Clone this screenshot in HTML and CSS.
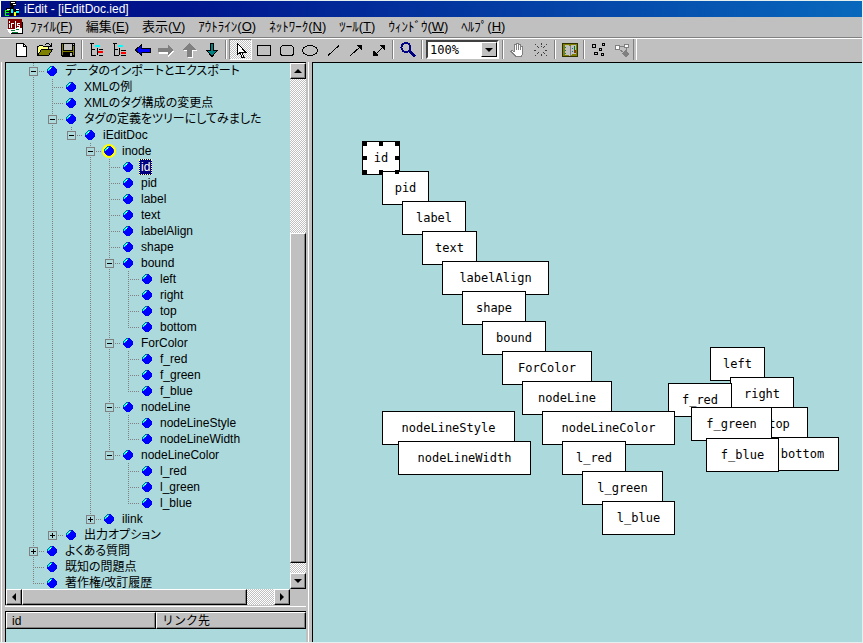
FILE: index.html
```html
<!DOCTYPE html>
<html lang="ja">
<head>
<meta charset="utf-8">
<title>iEdit - [iEditDoc.ied]</title>
<link rel="stylesheet" href="styles.css">
</head>
<body>
<svg class="defs" aria-hidden="true">
  <symbol id="ball" viewBox="0 0 10 10">
    <path fill="#00f" d="M3 0h4v1h1v1h1v1h1v4H9v1H8v1H7v1H3V9H2V8H1V7H0V3h1V2h1V1h1z"/>
    <path fill="#006c8c" d="M3 0h2v1H3zM2 1h1v1H2zM1 2h1v1H1zM0 3h1v2H0z"/>
    <path fill="#0ff" d="M3 1h2v1H3zM2 2h2v1H2zM1 3h2v1H1zM1 4h1v1H1z"/>
    <path fill="#fff" d="M3 2h1v1H3z"/>
  </symbol>
</svg>
<div class="window">
  <header class="titlebar">
    <svg width="16" height="16" viewBox="0 0 16 16"><path d="M5 0h6v5H9v3h5v4h-4l-2-3-2 3H1V7h4l1-2H5z"/><path fill="#fff" d="M6 1h4v1H6zM8 3h3v1H8zM2 8h3v1H2zM11 8h3v1h-3z"/><path fill="#0f0" d="M0 9h4v1H1v1h3v1H1v2h3v1H0z"/><path fill="#0ff" d="M6 8h2v5H6zM11 10h3v2h-3z"/><path fill="#ff0" d="M9 11h2v4H9z"/><path d="M5 12h3v3H5zM11 12h3v2h-3z"/></svg>
    <h1>iEdit - [iEditDoc.ied]</h1>
  </header>
  <nav class="menubar">
    <svg width="17" height="16" viewBox="0 0 17 16"><path fill="#800000" d="M1 0h14v11H1z"/><path fill="#fff" d="M2 2h1v2H2zM2 5h1v4H2zM4 4h3v1H5v4H4zM8 2h1v7H8zM10 4h3v1h-2v1h2v3h-3V8h2V7h-2z"/><path fill="#fff" d="M0 10l15-1v6H3z"/><path fill="#087830" d="M4 11h4v1H4zM9 10h3v1H9zM5 13h6v1H5z"/><path d="M15 3h1v12H4v-1h11z"/></svg>
    <button type="button">ﾌｧｲﾙ(<u>F</u>)</button>
    <button type="button">編集(<u>E</u>)</button>
    <button type="button">表示(<u>V</u>)</button>
    <button type="button">ｱｳﾄﾗｲﾝ(<u>O</u>)</button>
    <button type="button">ﾈｯﾄﾜｰｸ(<u>N</u>)</button>
    <button type="button">ﾂｰﾙ(<u>T</u>)</button>
    <button type="button">ｳｨﾝﾄﾞｳ(<u>W</u>)</button>
    <button type="button">ﾍﾙﾌﾟ(<u>H</u>)</button>
  </nav>
  <div class="toolbar" role="toolbar" aria-label="ツールバー">
    <button type="button" aria-label="新規"><svg viewBox="0 0 16 16"><path fill="#fff" stroke="#000" d="M2.500 1.500h7l3 3v10h-10z"/><path fill="none" stroke="#000" d="M9.500 1.500v3h3"/></svg></button>
    <button type="button" aria-label="開く"><svg viewBox="0 0 16 16"><path fill="#ffff80" stroke="#000" d="M.5 13.500v-9h1l1-1h3l1 1h5v3h-6z"/><path fill="#808000" stroke="#000" d="M.5 13.500l4-6h11l-4 6z"/><path d="M9 1h3v1H9zM8 2h1v1H8zM12 2h1v1h-1zM14 1h1v4h-4V4h2V3h1z"/></svg></button>
    <button type="button" aria-label="保存"><svg viewBox="0 0 16 16"><path d="M1 1h14v14H2l-1-1z"/><path fill="#808000" d="M2 2h1v11H2zM13 4h1v9h-1zM3 9h10v1H3z"/><path fill="silver" d="M4 2h8v6H4zM13 2h1v1h-1zM10 11h2v3h-2z"/></svg></button>
    <span class="sep"></span>
    <button type="button" aria-label="子ノード追加"><svg viewBox="0 0 16 16"><path d="M1 1h4v1H1zM2 2h1v12H2zM3 7h3v1H3zM3 13h4v1H3zM10 7h4v1h-4z"/><path fill="#0ff" d="M6 3h5v2H6z"/><path fill="#f00" d="M9 9h5v2H9z"/><path d="M8 6h1v7H8zM10 13h4v1h-4z"/></svg></button>
    <button type="button" aria-label="兄弟ノード追加"><svg viewBox="0 0 16 16"><path d="M1 1h4v1H1zM2 2h1v12H2zM3 7h3v1H3zM3 13h4v1H3zM9 8h5v1H9z"/><path fill="#0ff" d="M6 3h5v2H6z"/><path fill="#f00" d="M9 10h5v2H9z"/><path d="M7 6h1v7H7zM9 13h5v1H9z"/></svg></button>
    <button type="button" aria-label="左へ"><svg viewBox="0 0 16 16"><path fill="#00f" stroke="#000" d="M.5 8l6-5.500v3.500h9v4h-9v3.500z"/></svg></button>
    <button type="button" aria-label="右へ" disabled><svg viewBox="0 0 16 16"><path fill="#fff" d="M16 9l-6-5v3H1v5h9v3z"/><path fill="#808080" d="M15.500 8l-6-6v4H0v4h9.500v4z"/></svg></button>
    <button type="button" aria-label="上へ" disabled><svg viewBox="0 0 16 16"><path fill="#fff" d="M9 2l7 7h-4v7H7V9H2z"/><path fill="#808080" d="M8 1l7 7h-4v7H6V8H1z"/></svg></button>
    <button type="button" aria-label="下へ"><svg viewBox="0 0 16 16"><path fill="#008080" stroke="#000" d="M6.500 1.500h3v7h4L8 14.500 2.500 8.500h4z"/></svg></button>
    <span class="sep"></span>
    <button type="button" class="pressed" aria-label="選択" aria-pressed="true"><svg viewBox="0 0 16 16"><path fill="#fff" stroke="#000" d="M4.500 1.500v11l2.500-2 2 5h2l-2-5h4z"/></svg></button>
    <button type="button" aria-label="四角形"><svg viewBox="0 0 16 16"><path fill="none" stroke="#000" d="M1.500 3.500h13v10h-13z"/></svg></button>
    <button type="button" aria-label="角丸四角形"><svg viewBox="0 0 16 16"><rect x="1.500" y="3.500" width="13" height="10" rx="3" fill="none" stroke="#000"/></svg></button>
    <button type="button" aria-label="楕円"><svg viewBox="0 0 16 16"><ellipse cx="8" cy="8.500" rx="7.500" ry="5" fill="none" stroke="#000"/></svg></button>
    <button type="button" aria-label="線"><svg viewBox="0 0 16 16"><path stroke="#000" d="M3 13.500L14 3.500"/></svg></button>
    <button type="button" aria-label="矢印"><svg viewBox="0 0 16 16"><path stroke="#000" d="M2.500 13.500l10-9"/><path d="M9 3h5v5h-1L9 4z"/></svg></button>
    <button type="button" aria-label="両矢印"><svg viewBox="0 0 16 16"><path stroke="#000" d="M3 13.500l10-9"/><path d="M9 3h5v5h-1L9 4zM2 9h1l4 4v1H2z"/></svg></button>
    <span class="sep"></span>
    <button type="button" aria-label="ズーム"><svg viewBox="0 0 16 16"><circle cx="6" cy="5.500" r="4.500" fill="none" stroke="#000080" stroke-width="2"/><path stroke="#000080" stroke-width="3" d="M9.500 9l5.500 5.500"/></svg></button>
    <span class="sep"></span>
    <span class="combo"><select aria-label="表示倍率"><option>100%</option></select><span class="drop"><i class="tri down"></i></span></span>
    <span class="sep"></span>
    <button type="button" aria-label="手のひら" disabled><svg viewBox="0 0 16 16"><path fill="#fff" stroke="#808080" d="M4.500 10V3q1-1 2 0V1.500q1-1 2 0V3q1-2 2 0v2q1-2 2 0v6q0 3-2 3.500H6L1 9.500q1-2 3.500.5M6.500 3v5M8.500 3v5M10.500 4v4"/></svg></button>
    <button type="button" aria-label="整列" disabled><svg viewBox="0 0 16 16"><path stroke="#404040" stroke-dasharray="2 1" d="M2 2l4 4M14 2l-4 4M2 14l4-4M14 14l-4-4M8 1v4M8 12v3M1 8.500h3M12 8.500h3"/></svg></button>
    <span class="sep"></span>
    <button type="button" aria-label="地図"><svg viewBox="0 0 16 16"><path stroke="#303000" fill="#808000" d="M.5 1.500h15v13H.5z"/><path fill="silver" d="M3 3h3l2 1 2-1h4v9h-4l-2 2-2-1H3z"/><path fill="#808080" d="M8 4h1v10H8z"/><path fill="#008080" d="M3 5h1v1H3zM3 8h1v1H3zM3 11h1v1H3zM10 6h1v1h-1zM10 9h1v1h-1z"/><path fill="green" d="M12 4h1v7h-1z"/><path fill="red" d="M13 8h1v3h-1z"/></svg></button>
    <span class="sep"></span>
    <button type="button" aria-label="ノード"><svg viewBox="0 0 16 16"><path fill="silver" stroke="#000" d="M1.500 2.500h3v3h-3zM11.500 1.500h2v2h-2zM8.500 6.500h2v2h-2zM3.500 10.500h3v2h-3zM10.500 11.500h2v2h-2z"/></svg></button>
    <button type="button" aria-label="リンク" disabled><svg viewBox="0 0 16 16"><path fill="#fff" stroke="#808080" d="M1.500 3.500h4v4h-4zM10.500 2.500h4v3h-4z"/><path fill="none" stroke="#808080" d="M5.500 4.500h5M5 7l5 4M12.500 6v4"/><path fill="#808080" d="M11 8l4 4-3 3-4-3z"/></svg></button>
  </div>
  <main class="work">
    <aside class="side">
      <section class="outline">
        <div class="treeview">
          <ul class="tree">
            <li><div class="row"><button type="button" class="toggle" aria-label="閉じる"></button><svg class="ball"><use href="#ball"/></svg><span>データのインポートとエクスポート</span></div>
              <ul>
                <li><div class="row leaf"><svg class="ball"><use href="#ball"/></svg><span>XMLの例</span></div></li>
                <li><div class="row leaf"><svg class="ball"><use href="#ball"/></svg><span>XMLのタグ構成の変更点</span></div></li>
                <li><div class="row"><button type="button" class="toggle" aria-label="閉じる"></button><svg class="ball"><use href="#ball"/></svg><span>タグの定義をツリーにしてみました</span></div>
                  <ul>
                    <li><div class="row"><button type="button" class="toggle" aria-label="閉じる"></button><svg class="ball"><use href="#ball"/></svg><span>iEditDoc</span></div>
                      <ul>
                        <li><div class="row"><button type="button" class="toggle" aria-label="閉じる"></button><svg class="ball open"><use href="#ball"/></svg><span>inode</span></div>
                          <ul>
                            <li><div class="row leaf"><svg class="ball"><use href="#ball"/></svg><span class="selected">id</span></div></li>
                            <li><div class="row leaf"><svg class="ball"><use href="#ball"/></svg><span>pid</span></div></li>
                            <li><div class="row leaf"><svg class="ball"><use href="#ball"/></svg><span>label</span></div></li>
                            <li><div class="row leaf"><svg class="ball"><use href="#ball"/></svg><span>text</span></div></li>
                            <li><div class="row leaf"><svg class="ball"><use href="#ball"/></svg><span>labelAlign</span></div></li>
                            <li><div class="row leaf"><svg class="ball"><use href="#ball"/></svg><span>shape</span></div></li>
                            <li><div class="row"><button type="button" class="toggle" aria-label="閉じる"></button><svg class="ball"><use href="#ball"/></svg><span>bound</span></div>
                              <ul>
                                <li><div class="row leaf"><svg class="ball"><use href="#ball"/></svg><span>left</span></div></li>
                                <li><div class="row leaf"><svg class="ball"><use href="#ball"/></svg><span>right</span></div></li>
                                <li><div class="row leaf"><svg class="ball"><use href="#ball"/></svg><span>top</span></div></li>
                                <li><div class="row leaf"><svg class="ball"><use href="#ball"/></svg><span>bottom</span></div></li>
                              </ul>
                            </li>
                            <li><div class="row"><button type="button" class="toggle" aria-label="閉じる"></button><svg class="ball"><use href="#ball"/></svg><span>ForColor</span></div>
                              <ul>
                                <li><div class="row leaf"><svg class="ball"><use href="#ball"/></svg><span>f_red</span></div></li>
                                <li><div class="row leaf"><svg class="ball"><use href="#ball"/></svg><span>f_green</span></div></li>
                                <li><div class="row leaf"><svg class="ball"><use href="#ball"/></svg><span>f_blue</span></div></li>
                              </ul>
                            </li>
                            <li><div class="row"><button type="button" class="toggle" aria-label="閉じる"></button><svg class="ball"><use href="#ball"/></svg><span>nodeLine</span></div>
                              <ul>
                                <li><div class="row leaf"><svg class="ball"><use href="#ball"/></svg><span>nodeLineStyle</span></div></li>
                                <li><div class="row leaf"><svg class="ball"><use href="#ball"/></svg><span>nodeLineWidth</span></div></li>
                              </ul>
                            </li>
                            <li><div class="row"><button type="button" class="toggle" aria-label="閉じる"></button><svg class="ball"><use href="#ball"/></svg><span>nodeLineColor</span></div>
                              <ul>
                                <li><div class="row leaf"><svg class="ball"><use href="#ball"/></svg><span>l_red</span></div></li>
                                <li><div class="row leaf"><svg class="ball"><use href="#ball"/></svg><span>l_green</span></div></li>
                                <li><div class="row leaf"><svg class="ball"><use href="#ball"/></svg><span>l_blue</span></div></li>
                              </ul>
                            </li>
                          </ul>
                        </li>
                        <li><div class="row"><button type="button" class="toggle closed" aria-label="開く"></button><svg class="ball"><use href="#ball"/></svg><span>ilink</span></div></li>
                      </ul>
                    </li>
                  </ul>
                </li>
                <li><div class="row"><button type="button" class="toggle closed" aria-label="開く"></button><svg class="ball"><use href="#ball"/></svg><span>出力オプション</span></div></li>
              </ul>
            </li>
            <li><div class="row"><button type="button" class="toggle closed" aria-label="開く"></button><svg class="ball"><use href="#ball"/></svg><span>よくある質問</span></div></li>
            <li><div class="row leaf"><svg class="ball"><use href="#ball"/></svg><span>既知の問題点</span></div></li>
            <li><div class="row leaf"><svg class="ball"><use href="#ball"/></svg><span>著作権/改訂履歴</span></div></li>
          </ul>
        </div>
        <div class="scroll vertical">
          <button type="button" class="bevel" aria-label="上スクロール"><i class="tri up"></i></button>
          <span class="before"></span><span class="bevel thumb"></span><span class="after"></span>
          <button type="button" class="bevel" aria-label="下スクロール"><i class="tri down"></i></button>
        </div>
        <div class="scroll horizontal">
          <button type="button" class="bevel" aria-label="左スクロール"><i class="tri left"></i></button>
          <span class="bevel thumb"></span><span class="after"></span>
          <button type="button" class="bevel" aria-label="右スクロール"><i class="tri right"></i></button>
        </div>
      </section>
      <section class="links">
        <table><thead><tr><th scope="col">id</th><th scope="col">リンク先</th></tr></thead></table>
      </section>
    </aside>
    <section class="canvas" aria-label="ネットワーク">
      <div class="node left">left</div>
      <div class="node right">right</div>
      <div class="node top">top</div>
      <div class="node bottom">bottom</div>
      <div class="node f-red">f_red</div>
      <div class="node f-green">f_green</div>
      <div class="node f-blue">f_blue</div>
      <div class="node id">id</div>
      <div class="node pid">pid</div>
      <div class="node label">label</div>
      <div class="node text">text</div>
      <div class="node label-align">labelAlign</div>
      <div class="node shape">shape</div>
      <div class="node bound">bound</div>
      <div class="node for-color">ForColor</div>
      <div class="node node-line">nodeLine</div>
      <div class="node line-style">nodeLineStyle</div>
      <div class="node line-width">nodeLineWidth</div>
      <div class="node line-color">nodeLineColor</div>
      <div class="node l-red">l_red</div>
      <div class="node l-green">l_green</div>
      <div class="node l-blue">l_blue</div>
      <svg class="handles" width="38" height="34" viewBox="0 0 38 34"><path d="M0 0h5v5H0zM17 0h4v5h-4zM33 0h5v5h-5zM0 15h5v4H0zM33 15h5v4h-5zM0 29h5v5H0zM17 29h4v5h-4zM33 29h4v4h-4z"/></svg>
    </section>
  </main>
</div>
</body>
</html>
```
FILE: styles.css
```css
:root {
  --face: #c0c0c0;
  --shade: #808080;
  --water: #acd9dc;
  --dither: repeating-conic-gradient(#fff 0 25%, #c0c0c0 0 50%) 0 0 / 2px 2px;
}

* { box-sizing: border-box; }

body {
  margin: 0;
  background: #e4f0f0;
  color: #000;
  font: 12px/16px "Liberation Sans", "Noto Sans CJK JP", sans-serif;
}

button {
  margin: 0;
  padding: 0;
  border: 0;
  background: none;
  color: inherit;
  font: inherit;
}

.defs { position: absolute; width: 0; height: 0; }

svg { display: block; flex: none; shape-rendering: crispEdges; }

.window {
  display: flex;
  flex-direction: column;
  height: 100vh;
  padding: 1px 1px 1px 0;
}

.titlebar {
  display: flex;
  align-items: center;
  gap: 3px;
  height: 16px;
  padding-left: 4px;
  background: linear-gradient(90deg, #001084, #00148c 20%, #0868bc);
  border-left: 1px solid #fff;
  color: #fff;
}

.titlebar h1 { margin: 0; font-size: 12px; font-weight: 400; line-height: 14px; }

.menubar {
  display: flex;
  align-items: center;
  gap: 13px;
  height: 21px;
  padding-left: 7px;
  background: var(--face);
  border-bottom: 1px solid var(--shade);
  font-size: 13px;
  white-space: nowrap;
}

.menubar svg { margin-right: -7px; }

.toolbar {
  display: flex;
  align-items: center;
  height: 24px;
  padding: 0 0 2px 10px;
  background: var(--face);
  border-top: 1px solid #fff;
}

.toolbar button {
  display: grid;
  place-items: center;
  width: 23px;
  height: 21px;
}

.toolbar svg { width: 16px; height: 16px; }

.toolbar .pressed {
  background: var(--dither);
  border: 1px solid;
  border-color: var(--shade) #fff #fff var(--shade);
}

.sep {
  width: 2px;
  height: 19px;
  margin: 0 2px;
  border-left: 1px solid var(--shade);
  border-right: 1px solid #fff;
}

.toolbar::after {
  content: "";
  width: 2px;
  height: 21px;
  border-left: 1px solid var(--shade);
  border-right: 1px solid #fff;
}

.combo {
  display: grid;
  width: 73px;
  height: 19px;
  margin-left: 1px;
  margin-right: 1px;
  background: #fff;
  border: 2px solid;
  border-color: #404040 #fff #fff #404040;
}

.combo select {
  grid-area: 1 / 1;
  appearance: none;
  width: 100%;
  padding: 0 2px;
  border: 0;
  background: none;
  color: #000;
  font: 12px/14px "DejaVu Sans Mono", monospace;
}

.drop {
  grid-area: 1 / 1;
  justify-self: end;
  display: grid;
  place-items: center;
  width: 16px;
  background: var(--face);
  border: 1px solid;
  border-color: #fff #000 #000 #fff;
  pointer-events: none;
}

.tri { width: 0; height: 0; border: 4px solid transparent; }
.tri.up { border-top: 0; border-bottom-color: #000; }
.tri.down { border-bottom: 0; border-top-color: #000; }
.tri.left { border-left: 0; border-right-color: #000; }
.tri.right { border-right: 0; border-left-color: #000; }

.work {
  flex: 1;
  display: grid;
  grid-template-columns: 309px 1fr;
  min-height: 0;
  background: var(--face);
}

.side {
  display: flex;
  flex-direction: column;
  min-height: 0;
  margin-left: 1px;
  padding-left: 3px;
  padding-right: 2px;
  border-left: 1px solid #fff;
  border-right: 1px solid #fff;
}

.outline {
  flex: 1;
  display: grid;
  grid-template: 1fr 16px / 1fr 16px;
  min-height: 0;
  border-left: 1px solid #000;
  border-top: 1px solid #000;
}

.treeview { overflow: hidden; background: var(--water); }

.tree, .tree ul { margin: 0; padding: 0; list-style: none; }
.tree { padding-left: 18px; }
.tree ul { margin-left: 19px; }

.tree li {
  background: repeating-linear-gradient(var(--shade) 0 1px, transparent 1px 2px) 9px 0 / 1px 100% no-repeat;
}

.tree li:last-child { background-size: 1px 9px; }

.row {
  display: flex;
  align-items: center;
  height: 16px;
  padding-left: 5px;
  background: repeating-linear-gradient(90deg, var(--shade) 0 1px, transparent 1px 2px) 11px 8px / 10px 1px no-repeat;
  white-space: nowrap;
}

.row.leaf { padding-left: 23px; }

.row span { margin-left: 6px; padding: 0 2px; font-feature-settings: "palt"; }

.row .selected { background: #000080; color: #fff; outline: 1px dotted #ffff80; outline-offset: -1px; }

.toggle {
  width: 9px;
  height: 9px;
  margin-right: 9px;
  border: 1px solid var(--shade);
  background: linear-gradient(#000, #000) center / 5px 1px no-repeat, var(--water);
}

.toggle.closed {
  background: linear-gradient(#000, #000) center / 5px 1px no-repeat, linear-gradient(#000, #000) center / 1px 5px no-repeat, var(--water);
}

.ball { width: 10px; height: 10px; }

.ball.open { border-radius: 5px; background: #ff0; box-shadow: 0 0 0 2px #ff0; }

.scroll { display: flex; background: var(--dither); }
.vertical { flex-direction: column; }

.bevel {
  display: grid;
  place-items: center;
  background: var(--face);
  border: 1px solid;
  border-color: #fff #000 #000 #fff;
  box-shadow: inset -1px -1px var(--shade);
}

.scroll button { flex: none; width: 16px; height: 16px; }
.vertical .before { flex: 155; }
.vertical .thumb { flex: 329; }
.vertical .after { flex: 10; }
.horizontal .thumb { flex: 225; }
.horizontal .after { flex: 27; }

.links {
  height: 36px;
  margin-top: 1px;
  padding-top: 4px;
  border-top: 1px solid #fff;
}

.links table {
  display: block;
  width: 100%;
  height: 31px;
  border-left: 1px solid #000;
  border-top: 1px solid #000;
  background: var(--water);
}

.links thead { display: block; }
.links tr { display: flex; }

.links th {
  flex: 1;
  height: 17px;
  padding: 0 5px;
  background: var(--face);
  border: 1px solid;
  border-color: #fff #000 #000 #fff;
  box-shadow: inset -1px -1px var(--shade);
  font-weight: 400;
  line-height: 16px;
  text-align: left;
}

.canvas {
  position: relative;
  overflow: hidden;
  margin-left: 3px;
  background: var(--water);
  border-left: 1px solid #000;
  border-top: 1px solid #000;
}

.node {
  position: absolute;
  height: 34px;
  background: #fff;
  border: 1px solid #000;
  font: 12px/32px "DejaVu Sans Mono", monospace;
  text-align: center;
}

/* Node places, measured from the canvas corner */
.node.id, .handles { left: 49px; top: 78px; width: 38px; }
.handles { position: absolute; }
.pid { left: 69px; top: 108px; width: 47px; }
.label { left: 89px; top: 138px; width: 64px; }
.text { left: 109px; top: 168px; width: 55px; }
.label-align { left: 129px; top: 198px; width: 107px; }
.shape { left: 149px; top: 228px; width: 64px; }
.bound { left: 169px; top: 258px; width: 64px; }
.for-color { left: 189px; top: 288px; width: 90px; }
.node-line { left: 209px; top: 318px; width: 90px; }
.line-style { left: 69px; top: 348px; width: 133px; }
.line-width { left: 85px; top: 378px; width: 133px; }
.line-color { left: 229px; top: 348px; width: 133px; }
.l-red { left: 249px; top: 378px; width: 64px; }
.l-green { left: 269px; top: 408px; width: 81px; }
.l-blue { left: 289px; top: 438px; width: 73px; }
.node.left { left: 397px; top: 284px; width: 55px; }
.node.right { left: 417px; top: 314px; width: 64px; }
.top { left: 437px; top: 344px; width: 58px; }
.bottom { left: 453px; top: 374px; width: 73px; }
.f-red { left: 355px; top: 320px; width: 64px; }
.f-green { left: 378px; top: 344px; width: 81px; }
.f-blue { left: 393px; top: 375px; width: 73px; }
```
